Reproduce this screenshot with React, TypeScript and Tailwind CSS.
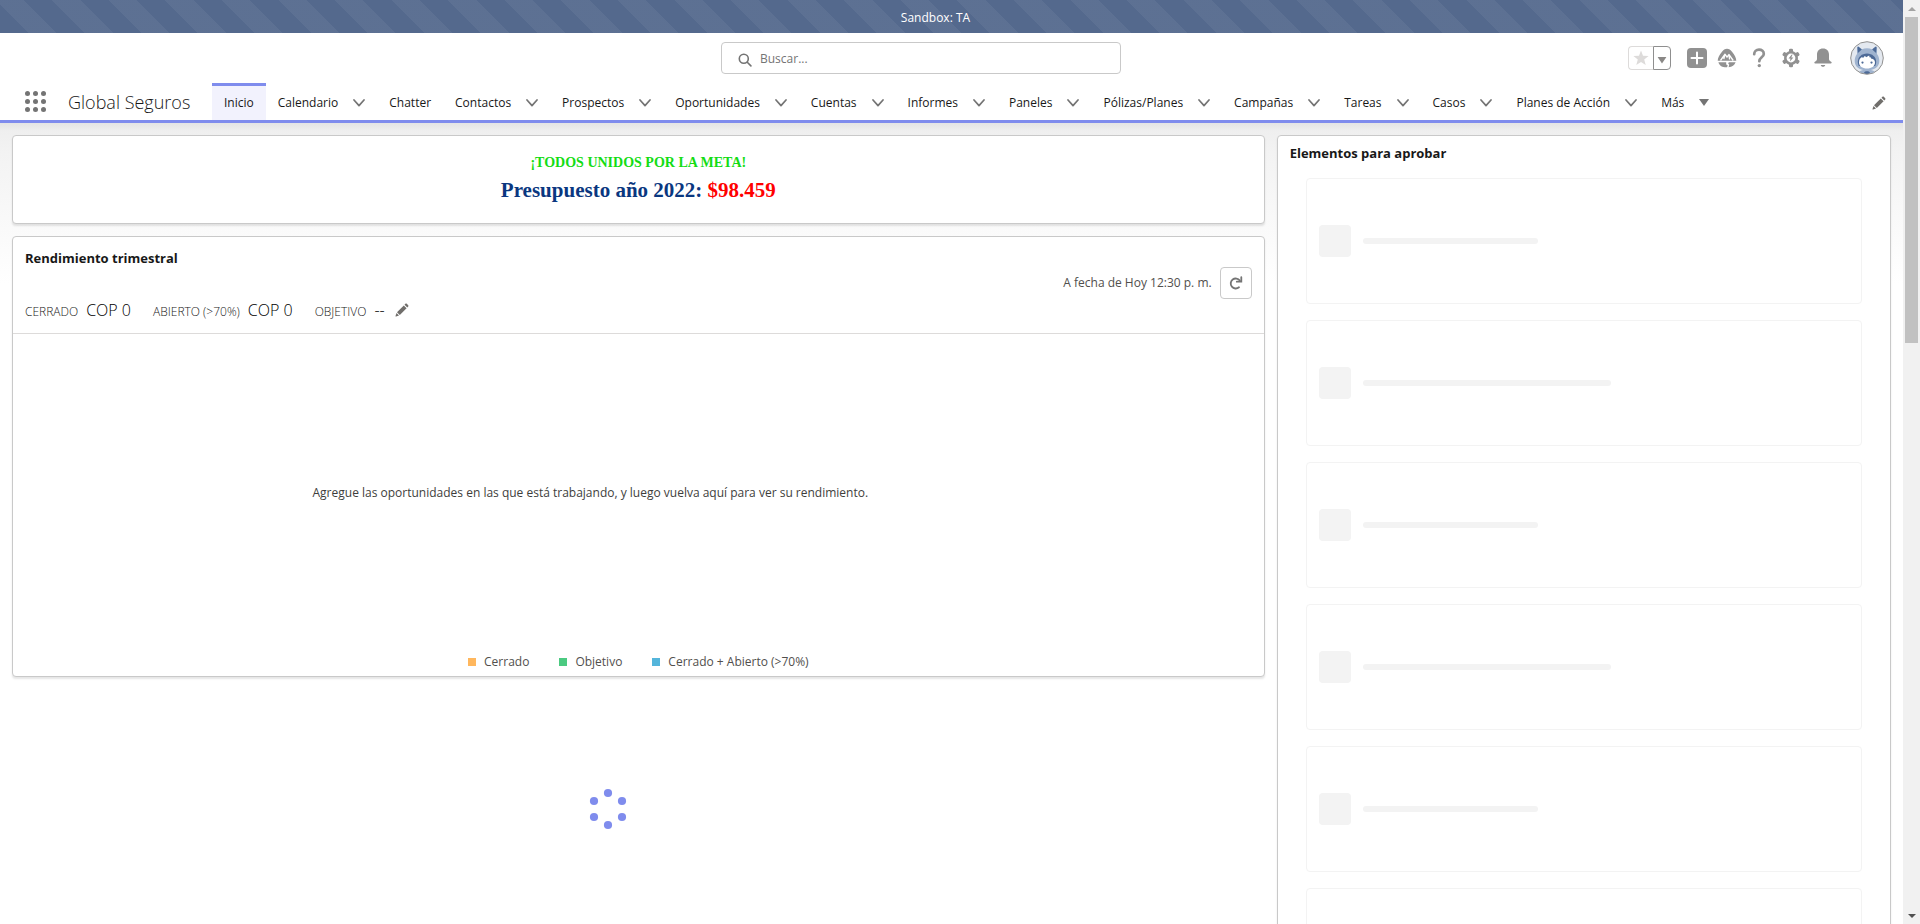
import React from 'react';

const SANS = "font-['Open_Sans','Noto_Sans',sans-serif]";

type NavItem = { label: string; menu?: boolean; active?: boolean };

const NAV: NavItem[] = [
  { label: 'Inicio', active: true },
  { label: 'Calendario', menu: true },
  { label: 'Chatter' },
  { label: 'Contactos', menu: true },
  { label: 'Prospectos', menu: true },
  { label: 'Oportunidades', menu: true },
  { label: 'Cuentas', menu: true },
  { label: 'Informes', menu: true },
  { label: 'Paneles', menu: true },
  { label: 'Pólizas/Planes', menu: true },
  { label: 'Campañas', menu: true },
  { label: 'Tareas', menu: true },
  { label: 'Casos', menu: true },
  { label: 'Planes de Acción', menu: true },
];

const LEGEND = [
  { label: 'Cerrado', color: 'bg-[#ffb75d]' },
  { label: 'Objetivo', color: 'bg-[#4bca81]' },
  { label: 'Cerrado + Abierto (>70%)', color: 'bg-[#54b5db]' },
];

const CARD = 'rounded border border-[#c9c9c9] bg-white shadow-[0_2px_2px_0_rgba(0,0,0,0.1)]';

function Chevron() {
  return (
    <svg viewBox="0 0 12 8" className="h-2 w-3" fill="none" stroke="#747474" strokeWidth="1.7" strokeLinecap="round" strokeLinejoin="round">
      <path d="M1 1l5 5.6L11 1" />
    </svg>
  );
}

function Pencil() {
  return (
    <svg viewBox="0 0 14 14" className="size-3.5" fill="#706e6b">
      <path d="M2 9.2L8.8 2.4l2.8 2.8L4.8 12z" />
      <path d="M9.5 1.7l.9-.9c.4-.4 1-.4 1.4 0l1.4 1.4c.4.4.4 1 0 1.4l-.9.9z" />
      <path d="M1.5 10l2.5 2.5-2.9 1c-.4.1-.7-.2-.6-.6z" />
    </svg>
  );
}

function Banner() {
  return (
    <div className="flex h-[33px] shrink-0 items-center justify-center bg-[#54698d] bg-[repeating-linear-gradient(45deg,transparent_0px,transparent_20px,rgba(255,255,255,0.05)_20px,rgba(255,255,255,0.05)_40px)] pt-0.5 pr-8 text-xs text-white">
      Sandbox: TA
    </div>
  );
}

function Avatar() {
  return (
    <svg viewBox="0 0 34 34" className="size-[34px]">
      <defs>
        <clipPath id="avatar-clip">
          <circle cx="17" cy="17" r="16" />
        </clipPath>
      </defs>
      <circle cx="17" cy="17" r="16" fill="#e4e9f0" />
      <g clipPath="url(#avatar-clip)">
        <path d="M7 6.500c0-1 1-1.400 1.800-.8L12 8.200c3-1.200 7-1.200 10 0l3.200-2.500c.8-.6 1.800-.2 1.800.8v6.500c1.500 2 2.300 4.500 2.300 7 0 6-5.300 9.500-12.300 9.500S4.700 26 4.700 20c0-2.500.8-5 2.300-7z" fill="#9fb3cf" />
        <path d="M7.500 6.700c0-.8.7-1.100 1.300-.6l3 2.400-3.900 3.500zM26.500 6.700c0-.8-.7-1.100-1.300-.6l-3 2.400 3.900 3.500z" fill="#4d6a97" />
        <path d="M7.800 21c0-5 4-8.500 9.200-8.500s9.200 3.500 9.200 8.500c0 1.500-.4 2.800-1 4H8.800c-.6-1.200-1-2.500-1-4z" fill="#4d6a97" />
        <path d="M9 21.500c0-2.800 1-4.500 3-5.500l1 1 2-2.200 1 1.500 3.200-1.800.3 1.800 1.500.2v1c2.600.5 4 1.800 4 4 0 3.700-3.500 6-8 6s-8-2.300-8-6z" fill="#fff" />
        <circle cx="12.500" cy="21.600" r="1.100" fill="#4d6a97" />
        <circle cx="21.500" cy="21.600" r="1.100" fill="#4d6a97" />
        <path d="M7.500 34c0-3.500 4-5.300 9.500-5.300s9.500 1.800 9.500 5.300z" fill="#9fb3cf" />
        <path d="M14 31.300c1-1.500 5-1.500 6 0L18.500 34h-3z" fill="#4d6a97" />
      </g>
      <circle cx="17" cy="17" r="16.300" fill="none" stroke="#8f8f8f" strokeWidth="1" />
    </svg>
  );
}

function HeaderActions() {
  return (
    <div className="flex items-center">
      <div className="mr-4 flex h-6">
        <button aria-label="Favorito" className="grid w-[25px] place-items-center rounded-l border border-r-0 border-[#dddbda]">
          <svg viewBox="0 0 16 16" className="size-4" fill="#dddbda">
            <path d="M8 .5l2 5.300 5.600.3-4.400 3.500 1.500 5.500L8 12l-4.700 3.100 1.500-5.500L.4 6.100 6 5.800z" />
          </svg>
        </button>
        <button aria-label="Lista de favoritos" className="grid w-[18px] place-items-center rounded-r border border-[#8f8f8f] pt-1">
          <svg viewBox="0 0 10 7" className="h-[7px] w-2.5" fill="#8a8886">
            <path d="M.6 0h8.800L5 6.500z" />
          </svg>
        </button>
      </div>
      <button aria-label="Acciones globales" className="mr-2.5">
        <svg viewBox="0 0 20 20" className="size-5">
          <rect width="20" height="20" rx="4" fill="#919191" />
          <path d="M10 4.500v11M4.500 10h11" stroke="#fff" strokeWidth="2" strokeLinecap="round" />
        </svg>
      </button>
      <button aria-label="Centro de orientación" className="mr-[15px]">
        <svg viewBox="0 0 20 20" className="size-5">
          <path d="M10 .8c2 0 3.600 1.300 5 3 2.500 2.900 4.200 6.200 4.300 9H.7c.1-2.800 1.800-6.100 4.300-9 1.400-1.700 3-3 5-3z" fill="#919191" />
          <path d="M1.400 14.200h7.800v2.200l1.500.8-.6 2.100C6 19.600 2.500 18 1.400 14.200zM18.600 14.200h-6.800l-.6 1.600 1 .8-.6 2.600c3.500-.4 6-2 7-5z" fill="#919191" />
          <path d="M3.500 12.500L8 6.200l2 3 1.900-2.700 4.300 6M8 6.200l-1.200 5M11.900 6.500l.7 5" stroke="#fff" strokeWidth="1.300" fill="none" strokeLinejoin="round" />
        </svg>
      </button>
      <button aria-label="Ayuda" className="mr-[15px]">
        <svg viewBox="0 0 14 20" className="h-5 w-3.5">
          <path d="M2.200 6.200C2.200 3.500 4.200 1.700 7 1.700s4.800 1.700 4.800 4.200c0 3.200-4.500 3.600-4.500 7.300" fill="none" stroke="#919191" strokeWidth="2.700" strokeLinecap="round" />
          <circle cx="7.300" cy="17.600" r="1.700" fill="#919191" />
        </svg>
      </button>
      <button aria-label="Configuración" className="mr-[13px]">
        <svg viewBox="0 0 20 20" className="size-5">
          <g fill="#919191">
            <circle cx="10" cy="10" r="7" />
            <rect x="8" y="0.800" width="4" height="18.400" rx="1.200" />
            <rect x="8" y="0.800" width="4" height="18.400" rx="1.200" transform="rotate(60 10 10)" />
            <rect x="8" y="0.800" width="4" height="18.400" rx="1.200" transform="rotate(120 10 10)" />
          </g>
          <circle cx="10" cy="10" r="4.400" fill="#fff" />
          <path d="M10.800 6.600L7.500 10.600h2l-.6 3 3.500-4.200h-2.100l1.300-2.800z" fill="#919191" />
        </svg>
      </button>
      <button aria-label="Notificaciones" className="mr-[18px]">
        <svg viewBox="0 0 18 20" className="h-5 w-[18px]" fill="#919191">
          <path d="M9 .5c3.800 0 6 2.600 6 6v4.500c0 1.300.8 1.800 1.700 2.400.7.300 1 .7 1 1.200 0 .5-.4.900-.9.900H1.200c-.5 0-.9-.4-.9-.9s.3-.9 1-1.200C2.200 12.800 3 12.300 3 11V6.500c0-3.400 2.200-6 6-6z" />
          <path d="M6.800 16.900h4.400c0 1.100-1 1.900-2.200 1.900s-2.200-.8-2.200-1.900z" />
        </svg>
      </button>
      <button aria-label="Ver perfil">
        <Avatar />
      </button>
    </div>
  );
}

function Header() {
  return (
    <header className="grid h-[50px] shrink-0 grid-cols-[minmax(0,721fr)_400px_minmax(0,782fr)] items-center bg-white">
      <div />
      <label className="flex h-8 items-center gap-2 rounded border border-[#c9c9c9] bg-white pl-4">
        <svg viewBox="0 0 14 14" className="mt-1 size-3.5" fill="none" stroke="#747474" strokeWidth="1.600">
          <circle cx="5.800" cy="5.800" r="4.500" />
          <path d="M9.300 9.300l3.600 3.600" strokeLinecap="round" />
        </svg>
        <input aria-label="Buscar" placeholder="Buscar..." className="min-w-0 flex-1 bg-transparent pt-0.5 text-xs outline-none placeholder:text-[#747474]" />
      </label>
      <div className="flex justify-end pr-[19px]">
        <HeaderActions />
      </div>
    </header>
  );
}

function NavBar() {
  return (
    <nav className="flex h-10 shrink-0 border-b-[3px] border-[#7f8ced] bg-white pl-6 text-xs text-[#181818]">
      <button aria-label="Iniciador de aplicación" className="mr-[22px] grid w-[22px] place-content-center grid-cols-[repeat(3,5px)] gap-x-[3px] gap-y-[3px]">
        {Array.from({ length: 9 }, (_, i) => (
          <span key={i} className="size-[5px] rounded-full bg-[#747474]" />
        ))}
      </button>
      <span className="flex w-36 items-center whitespace-nowrap text-lg font-light">Global Seguros</span>
      {NAV.map((item) => (
        <div
          key={item.label}
          className={
            item.active
              ? 'flex items-center border-t-[3px] border-[#7f8ced] bg-[#f2f2fd] px-3'
              : 'flex items-center gap-[15px] px-3 pt-0.5'
          }
        >
          <a href="#" className="whitespace-nowrap">{item.label}</a>
          {item.menu && (
            <button aria-label={`Lista ${item.label}`}>
              <Chevron />
            </button>
          )}
        </div>
      ))}
      <button className="flex items-center gap-[15px] px-3 pt-0.5">
        Más
        <svg viewBox="0 0 10 7" className="h-[7px] w-2.5" fill="#747474">
          <path d="M0 0h10L5 7z" />
        </svg>
      </button>
      <button aria-label="Modificar elementos de navegación" className="ml-auto mr-[17px] pt-0.5">
        <Pencil />
      </button>
    </nav>
  );
}

function Goal() {
  return (
    <section className={`${CARD} h-[89px] pt-[15px] text-center font-['Liberation_Serif',serif] font-bold`}>
      <p className="text-sm leading-6 text-[#14dc14]">¡TODOS UNIDOS POR LA META!</p>
      <p className="text-[21px] leading-[30px] text-[#0a3780]">
        Presupuesto año 2022: <span className="text-[#ff0000]">$98.459</span>
      </p>
    </section>
  );
}

function Metric({ label, value }: { label: string; value: string }) {
  return (
    <div className="flex items-baseline gap-2">
      <span className="text-xs font-light text-[#181818]">{label}</span>
      <span className="text-base font-light text-black">{value}</span>
    </div>
  );
}

function Performance() {
  return (
    <section className={`${CARD} flex h-[441px] flex-col`}>
      <div className="flex h-[97px] items-center border-b border-[#dddbda] px-3">
        <div className="flex flex-1 flex-col gap-[30px]">
          <h2 className="text-[13px] leading-5 font-bold text-[#181818]">Rendimiento trimestral</h2>
          <div className="flex items-center gap-[22px] leading-6">
            <Metric label="CERRADO" value="COP 0" />
            <Metric label="ABIERTO (>70%)" value="COP 0" />
            <div className="flex items-center gap-2.5">
              <Metric label="OBJETIVO" value="--" />
              <button aria-label="Modificar objetivo"><Pencil /></button>
            </div>
          </div>
        </div>
        <div className="flex items-center gap-2 pb-1">
          <span className="text-xs text-[#514f4d]">A fecha de Hoy 12:30 p. m.</span>
          <button aria-label="Actualizar" className="grid size-8 place-items-center rounded border border-[#c9c9c9]">
            <svg viewBox="0 0 14 14" className="size-3.5" fill="none" stroke="#747474" strokeWidth="1.800">
              <path d="M10 11.300A5 5 0 1 1 10.800 4.600" strokeLinecap="round" />
              <path d="M12.300 1.200V5.700H7.800" strokeLinecap="round" />
            </svg>
          </button>
        </div>
      </div>
      <div className="flex flex-1 items-center justify-center pt-1 pr-24 text-xs text-[#3e3e3c]">
        Agregue las oportunidades en las que está trabajando, y luego vuelva aquí para ver su rendimiento.
      </div>
      <ul className="flex h-7 items-center justify-center gap-[30px] text-xs text-[#514f4d]">
        {LEGEND.map((l) => (
          <li key={l.label} className="flex items-center gap-2">
            <span className={`size-2 ${l.color}`} />
            {l.label}
          </li>
        ))}
      </ul>
    </section>
  );
}

function Spinner() {
  return (
    <div role="status" aria-label="Cargando" className="flex justify-center pr-[60px]">
      <svg viewBox="0 0 40 44" className="h-11 w-10" fill="#7f8ced">
        <circle cx="20" cy="6" r="4.100" />
        <circle cx="34" cy="14" r="4.100" />
        <circle cx="34" cy="30" r="4.100" />
        <circle cx="20" cy="38" r="4.100" />
        <circle cx="6" cy="30" r="4.100" />
        <circle cx="6" cy="14" r="4.100" />
      </svg>
    </div>
  );
}

function Approvals() {
  return (
    <section className={`${CARD} h-[1100px] px-3 pt-[7px]`}>
      <h2 className="text-[13px] leading-5 font-bold text-[#181818]">Elementos para aprobar</h2>
      <div className="mt-[15px] flex flex-col gap-4 px-4">
        {Array.from({ length: 6 }, (_, i) => (
          <div key={i} className="flex h-[126px] items-center gap-3 rounded border border-[#f3f3f3] px-3">
            <div className="size-8 rounded-sm bg-[#f3f3f3]" />
            <div className="flex-1">
              <div className={i % 2 ? 'h-1.5 w-[51%] rounded-full bg-[#f3f3f3]' : 'h-1.5 w-[36%] rounded-full bg-[#f3f3f3]'} />
            </div>
          </div>
        ))}
      </div>
    </section>
  );
}

function ScrollTrack() {
  return (
    <div aria-hidden="true" className="flex w-[17px] shrink-0 flex-col items-center bg-[#f1f1f1]">
      <div className="grid h-[17px] place-items-center">
        <svg viewBox="0 0 8 4" className="h-1 w-2" fill="#a3a3a3"><path d="M0 4l4-4 4 4z" /></svg>
      </div>
      <div className="h-[326px] w-[13px] bg-[#c1c1c1]" />
      <div className="mt-auto grid h-[17px] place-items-center">
        <svg viewBox="0 0 8 4" className="h-1 w-2" fill="#505050"><path d="M0 0l4 4 4-4z" /></svg>
      </div>
    </div>
  );
}

export default function App() {
  return (
    <div className={`flex h-screen overflow-hidden bg-white ${SANS}`}>
      <div className="flex min-w-0 flex-1 flex-col">
        <Banner />
        <Header />
        <NavBar />
        <main className="min-h-0 flex-1 overflow-hidden bg-white bg-[linear-gradient(180deg,#e4e4e4_0px,#efefef_8px,#f3f3f3_30px,#ffffff_160px)] p-3">
          <div className="grid grid-cols-[minmax(0,1254fr)_minmax(0,615fr)] items-start gap-3">
            <div className="flex flex-col gap-3">
              <Goal />
              <Performance />
              <div className="pt-[98px]"><Spinner /></div>
            </div>
            <Approvals />
          </div>
        </main>
      </div>
      <ScrollTrack />
    </div>
  );
}
